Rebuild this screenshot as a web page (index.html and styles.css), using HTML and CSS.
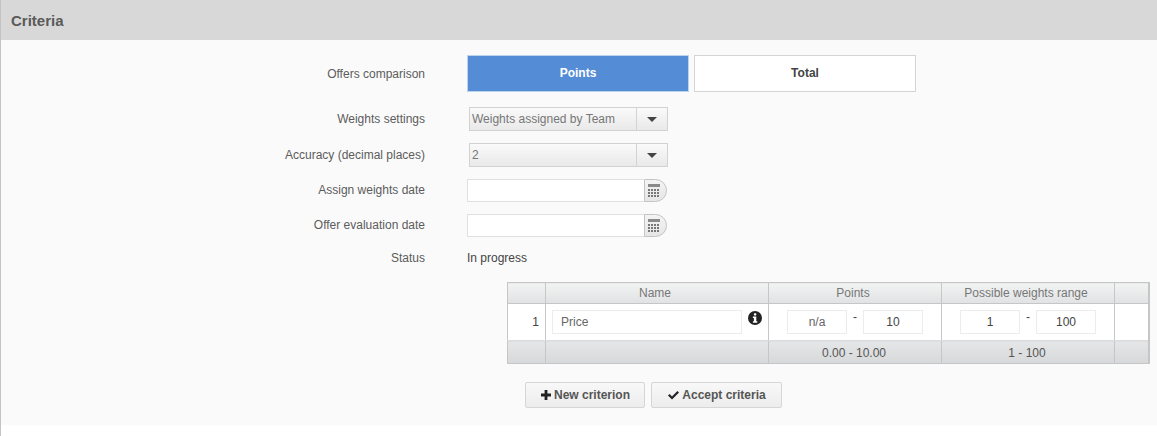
FILE: index.html
```html
<!DOCTYPE html>
<html lang="en">
<head>
<meta charset="utf-8">
<title>Criteria</title>
<link rel="stylesheet" href="styles.css">
</head>
<body>
<section class="panel">
  <header class="panel-head">Criteria</header>
  <div class="panel-body">
    <div class="form">
      <div class="row row-toggle">
        <div class="label">Offers comparison</div>
        <div class="toggle">
          <button class="tog tog-on">Points</button>
          <button class="tog">Total</button>
        </div>
      </div>
      <div class="row row-select">
        <div class="label">Weights settings</div>
        <div class="select"><span class="select-val">Weights assigned by Team</span><span class="select-arrow"><i class="tri"></i></span></div>
      </div>
      <div class="row row-select">
        <div class="label">Accuracy (decimal places)</div>
        <div class="select"><span class="select-val">2</span><span class="select-arrow"><i class="tri"></i></span></div>
      </div>
      <div class="row row-date">
        <div class="label">Assign weights date</div>
        <div class="date"><span class="date-input"></span><span class="date-btn"><svg width="12" height="13" viewBox="0 0 12 13"><rect x="0" y="0" width="12" height="3" fill="#8a8a8a"/><g fill="#777"><rect x="0" y="5" width="2" height="2"/><rect x="3" y="5" width="2" height="2"/><rect x="6" y="5" width="2" height="2"/><rect x="9" y="5" width="2" height="2"/><rect x="0" y="8" width="2" height="2"/><rect x="3" y="8" width="2" height="2"/><rect x="6" y="8" width="2" height="2"/><rect x="9" y="8" width="2" height="2"/><rect x="0" y="11" width="2" height="2"/><rect x="3" y="11" width="2" height="2"/><rect x="6" y="11" width="2" height="2"/><rect x="9" y="11" width="2" height="2"/></g></svg></span></div>
      </div>
      <div class="row row-date">
        <div class="label">Offer evaluation date</div>
        <div class="date"><span class="date-input"></span><span class="date-btn"><svg width="12" height="13" viewBox="0 0 12 13"><rect x="0" y="0" width="12" height="3" fill="#8a8a8a"/><g fill="#777"><rect x="0" y="5" width="2" height="2"/><rect x="3" y="5" width="2" height="2"/><rect x="6" y="5" width="2" height="2"/><rect x="9" y="5" width="2" height="2"/><rect x="0" y="8" width="2" height="2"/><rect x="3" y="8" width="2" height="2"/><rect x="6" y="8" width="2" height="2"/><rect x="9" y="8" width="2" height="2"/><rect x="0" y="11" width="2" height="2"/><rect x="3" y="11" width="2" height="2"/><rect x="6" y="11" width="2" height="2"/><rect x="9" y="11" width="2" height="2"/></g></svg></span></div>
      </div>
      <div class="row row-status">
        <div class="label">Status</div>
        <div class="status">In progress</div>
      </div>
    </div>
    <table class="grid">
      <colgroup><col class="c1"><col class="c2"><col class="c3"><col class="c4"><col class="c5"></colgroup>
      <thead>
        <tr><th></th><th>Name</th><th>Points</th><th>Possible weights range</th><th></th></tr>
      </thead>
      <tbody>
        <tr>
          <td class="num">1</td>
          <td><div class="name-cell"><span class="inp inp-name">Price</span><svg class="info" width="14" height="14" viewBox="0 0 14 14"><circle cx="7" cy="7" r="7" fill="#222"/><rect x="5.9" y="2.2" width="2.4" height="2.2" rx=".6" fill="#fff"/><path d="M4.9 5.6h3.4v4.6h1v1.5H4.9v-1.5h1V7.1h-1z" fill="#fff"/></svg></div></td>
          <td><div class="range"><span class="inp inp-num">n/a</span><span class="dash">-</span><span class="inp inp-num strong">10</span></div></td>
          <td><div class="range"><span class="inp inp-num strong">1</span><span class="dash">-</span><span class="inp inp-num strong">100</span></div></td>
          <td></td>
        </tr>
      </tbody>
      <tfoot>
        <tr><td></td><td></td><td>0.00 - 10.00</td><td>1 - 100</td><td></td></tr>
      </tfoot>
    </table>
    <div class="actions">
      <button class="btn btn-new"><svg width="10" height="10" viewBox="0 0 10 10"><path d="M3.6 0h2.8v3.6H10v2.8H6.4V10H3.6V6.4H0V3.6h3.6z" fill="#222"/></svg>New criterion</button>
      <button class="btn btn-accept"><svg width="11" height="9" viewBox="0 0 11 9"><path d="M0 4.6 1.6 3 4 5.4 9.4 0 11 1.6 4 8.6z" fill="#222"/></svg>Accept criteria</button>
    </div>
  </div>
</section>
</body>
</html>
```

FILE: styles.css
```css
* { box-sizing: border-box; }
html, body { margin: 0; padding: 0; background: #fff; }
body { font-family: "Liberation Sans", Arial, sans-serif; font-size: 12px; color: #555; height: 436px; overflow: hidden; }

.panel { height: 436px; border-left: 1px solid #c4c4c4; }
.panel-head { height: 40px; background: #d8d8d8; padding-left: 10px; font-size: 15px; font-weight: bold; line-height: 41px; color: #5a5a5a; }
.panel-body { height: 385px; background: #fafafa; padding-top: 15px; }

.row { display: flex; align-items: center; }
.label { width: 424px; text-align: right; margin-right: 42px; color: #5c5c5c; }
.row-toggle { height: 37px; margin-bottom: 15px; }
.row-select { height: 24px; margin-bottom: 12px; }
.row-date { height: 23px; margin-bottom: 12px; }
.row-date .label { padding-bottom: 1px; }
.row-status { height: 18px; }

.toggle { display: flex; gap: 5px; }
.tog { width: 222px; height: 37px; border: 1px solid #d4d4d4; background: #fff; font: bold 12px "Liberation Sans", Arial, sans-serif; color: #444; padding: 0 0 2px; }
.tog-on { background: #548cd6; border-color: #bcd3ee; color: #fff; }

.select { display: flex; width: 199px; height: 24px; margin-left: 2px; border: 1px solid #d2d2d2; background: linear-gradient(#fafafa, #e9e9e9); }
.select-val { width: 167px; padding-left: 2px; line-height: 22px; color: #777; border-right: 1px solid #d2d2d2; white-space: nowrap; }
.select-arrow { flex: 1; display: flex; align-items: center; justify-content: center; }
.tri { width: 0; height: 0; border-left: 5px solid transparent; border-right: 5px solid transparent; border-top: 5px solid #444; }

.date { display: flex; width: 200px; height: 23px; }
.date-input { width: 177px; background: #fff; border: 1px solid #e0e0e0; border-right: 0; }
.date-btn { width: 23px; display: flex; align-items: center; justify-content: center; padding-right: 4px; border: 1px solid #c4c4c4; border-radius: 0 12px 12px 0; background: linear-gradient(#f4f4f4, #e6e6e6); }

.status { color: #444; }

.grid { width: 642px; margin: 15px 0 0 506px; border-collapse: collapse; table-layout: fixed; border: 1px solid #c6c6c6; border-right: 2px solid #c6c6c6; background: #fff; }
.c1 { width: 38px; } .c2 { width: 223px; } .c3 { width: 173px; } .c4 { width: 173px; } .c5 { width: 34px; }
.grid th, .grid td { border-left: 1px solid #c6c6c6; padding: 0; text-align: center; font-weight: normal; }
.grid th { height: 21px; padding-right: 4px; background: linear-gradient(#f2f3f3, #e0e2e3); color: #777; border-bottom: 1px solid #c6c6c6; }
.grid tbody td { height: 37px; background: #fff; color: #444; border-bottom: 1px solid #dcdcdc; }
.grid tfoot td { height: 23px; padding: 2px 2px 0 0; background: linear-gradient(#e4e6e7, #d6d8d9); color: #555; border-top: 1px solid #fff; }
.grid .num { text-align: right; padding-right: 6px; font-size: 12px; }

.name-cell { display: flex; align-items: flex-start; padding-left: 6px; }
.inp { display: block; height: 24px; line-height: 22px; background: #fff; border: 1px solid #ececec; color: #666; }
.inp-name { width: 190px; text-align: left; padding-left: 8px; }
.info { margin: 1px 0 0 6px; }
.range { display: flex; justify-content: center; align-items: flex-start; }
.inp-num { width: 60px; text-align: center; }
.strong { color: #444; }
.dash { width: 16px; line-height: 14px; color: #444; }

.actions { display: flex; gap: 6px; margin: 18px 0 0 524px; }
.btn { display: flex; align-items: center; justify-content: center; gap: 3px; height: 26px; border: 1px solid #d6d6d6; border-radius: 2px; background: linear-gradient(#f8f8f8, #ececec); font: bold 12px "Liberation Sans", Arial, sans-serif; color: #555; padding: 0; }
.btn-new { width: 120px; padding-left: 1px; }
.btn-accept { width: 131px; padding-left: 1px; }
```
